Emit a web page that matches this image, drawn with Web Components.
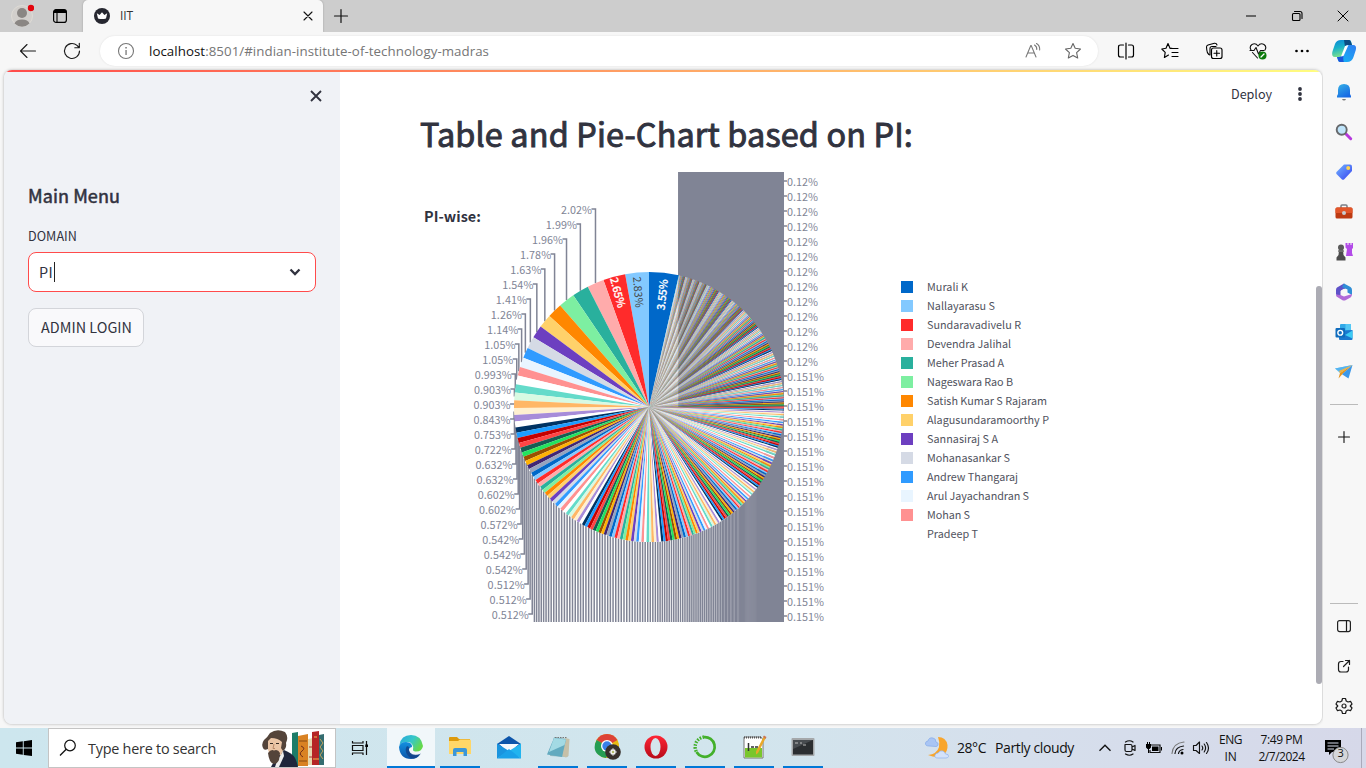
<!DOCTYPE html>
<html lang="en">
<head>
<meta charset="utf-8">
<title>IIT</title>
<style>
html,body{margin:0;height:100%;overflow:hidden;background:#f7f7f7}
</style>
</head>
<body>
<desktop-screen></desktop-screen>
<script>
const SOURCE = '"Noto Sans CJK SC","Noto Sans",sans-serif';
const SEGOE = '"Open Sans","Noto Sans",sans-serif';

function define(name, css, html, after) {
  customElements.define(name, class extends HTMLElement {
    connectedCallback() {
      if (this.shadowRoot) return;
      this.attachShadow({mode: 'open'}).innerHTML = '<style>' + css + '</style>' + (typeof html === 'function' ? html(this) : html);
      if (after) after(this);
    }
  });
}

/* A run of text tracked to a given width: <text-run w="120" size="14"> */
define('text-run', ':host{display:block;white-space:nowrap;flex:none}span{display:inline-block}', '<span><slot></slot></span>', el => {
  const size = el.getAttribute('size');
  if (size) el.style.fontSize = size + 'px';
  const w = +el.getAttribute('w');
  if (!w) return;
  const span = el.shadowRoot.querySelector('span');
  const n = el.textContent.length;
  span.style.letterSpacing = ((w - span.getBoundingClientRect().width) / n) + 'px';
  el.style.width = w + 'px';
});

const line = (d, w = 1, c = '#1b1b1b') => `<path d="${d}" fill="none" stroke="${c}" stroke-width="${w}" stroke-linecap="round" stroke-linejoin="round"/>`;
const ICONS = {
  profile: [24, 24, `<circle cx="12" cy="12" r="10.5" fill="#d2cfcc" stroke="#dedbd6"/><circle cx="12" cy="9" r="5" fill="#8a8683"/><path d="M4.5 19.5Q6 15.5 12 15.5T19.5 19.5Q16 22.8 12 22.8T4.500 19.500" fill="#8a8683"/><circle cx="21" cy="4" r="3.2" fill="#e3040d"/>`],
  workspace: [16, 16, `<rect x="1.600" y="1.600" width="12.800" height="12.800" rx="2.500" fill="none" stroke="#000" stroke-width="1.200"/><path d="M1.500 5V4Q1.500 1.500 4 1.500H12Q14.500 1.500 14.500 4V5Z"/>${line('M5 5V14', 1.1, '#000')}`],
  crown: [18, 18, `<circle cx="9" cy="9" r="8" fill="#262730"/><path d="M3.800 6.200L6.600 8 9 5.300 11.400 8 14.200 6.200 13 11.500Q9 12.700 5 11.500Z" fill="#fff"/>`],
  close: [12, 12, line('M2 2L10 10M10 2L2 10', 1.1, '#111')],
  plus: [16, 16, line('M8 1.500V14.500M1.500 8H14.500', 1.2, '#111')],
  railplus: [16, 16, line('M8 2.500V13.500M2.500 8H13.500', 1.1, '#111')],
  min: [12, 12, '<rect x="1" y="5.500" width="10" height="1" fill="#000"/>'],
  restore: [12, 12, line('M3.500 3.500H8Q9 3.500 9 4.500V9.500Q9 10.500 8 10.500H2.500Q1.500 10.500 1.500 9.500V4.500Q1.500 3.500 2.500 3.500H4M3.500 1.500H9Q11 1.500 11 3.500V8.500', 1.1, '#000')],
  winclose: [12, 12, line('M1 1L11 11M11 1L1 11', 1, '#000')],
  back: [20, 20, line('M17.500 10H2.500M9 3.500L2.500 10 9 16.500', 1.1)],
  refresh: [20, 20, line('M17.500 10A7.500 7.500 0 1 1 15 4.400L17 6.500M17.300 2.300V6.700H12.800', 1.15)],
  info: [18, 18, `<circle cx="9" cy="9" r="7.500" fill="none" stroke="#777" stroke-width="1.100"/><path d="M8.400 8h1.300v5H8.400zM8.300 5h1.500v1.500H8.300z" fill="#777"/>`],
  read: [18, 18, line('M2 15L6.800 3.500H7.200L12 15M4 11H10M10.500 3Q13 4.500 12.800 7.500M12.500 1.500Q16 3.500 15.700 8', 1.05, '#777')],
  star: [18, 18, line('M9 1.500L11.200 6.300 16.500 7 12.600 10.600 13.700 16 9 13.400 4.300 16 5.400 10.600 1.500 7 6.800 6.300Z', 1.1, '#666')],
  split: [18, 18, line('M6.500 3H3.500Q1.500 3 1.500 5V13Q1.500 15 3.500 15H6.500M11.500 3H14.500Q16.500 3 16.500 5V13Q16.500 15 14.500 15H11.500M9 1V17', 1.2, '#000')],
  favs: [18, 18, line('M10.500 6.500L9 6.300 7 1.500 5 6.300 0.800 7 4.200 10.300 3.400 15.500 7.500 13M10.500 6.500H17M11 10.500H17M11 14.500H17M9 6.300H11', 1.15, '#000')],
  collections: [18, 18, `${line('M5 13L3.800 12.500Q2 11 1.800 8L1.500 5Q1.500 3.500 3 3L9.500 1.200Q11.500 1 12 3M5 13V6.500Q5 4.500 7 4.500H11', 1.1, '#000')}<rect x="6.500" y="6" width="10.500" height="10.500" rx="2" fill="#f7f7f7" stroke="#000" stroke-width="1.150"/>${line('M11.750 8.500V14M9 11.250H14.500', 1.1, '#000')}`],
  health: [18, 18, `${line('M2 8Q0 4.500 3 2.500 6.500 0.500 9 4 11.500 0.500 15 2.500 18 4.500 16 8M1 8.500H5L7 5.500 9.500 12 11.500 8.500H15M3.500 10.500L8.500 16', 1.1, '#111')}<circle cx="13.500" cy="13.500" r="4" fill="#0b7a0b"/>${line('M12 15L15 12', 1.2, '#fff')}`],
  dots: [16, 6, '<circle cx="2.500" cy="3" r="1.350"/><circle cx="8" cy="3" r="1.350"/><circle cx="13.500" cy="3" r="1.350"/>'],
  copilot: [26, 26, `<defs><linearGradient id="a" x1="0" y1="0" x2=".3" y2="1"><stop offset="0" stop-color="#0a86d8"/><stop offset=".5" stop-color="#1ab2c8"/><stop offset="1" stop-color="#7de18c"/></linearGradient><linearGradient id="b" x1="1" y1="0" x2="0" y2="1"><stop offset="0" stop-color="#2f7df2"/><stop offset="1" stop-color="#13b8f5"/></linearGradient></defs><path d="M10 2H18Q20 2 20.500 5L21 7H17Q15 7 14 10L11.500 17Q10.500 19 8 19H4Q.300 19 1.300 14L4 6Q5.500 2 10 2Z" fill="url(#a)"/><path d="M13 2H18Q19.500 2 20 4L21 7H17Q15 7 14 9Z" fill="#0b4c83"/><path d="M16 24H9Q7.500 24 7 22L6 19H8Q10.500 19 11.500 17L14 9Q15 7 17 7H22Q26 7 24.800 12L22.500 19Q21 24 16 24Z" fill="url(#b)"/><path d="M6 19H8Q10.500 19 11.500 17L13 13Q11.500 22 13 24H9Q7.500 24 7 22Z" fill="#1c55d9"/><path d="M14 8L17.500 7 12.500 18 10 18.500Z" fill="#fff"/>`],
  bell: [18, 18, `<defs><linearGradient id="a" x1="0" y1="0" x2=".6" y2="1"><stop offset="0" stop-color="#37b3e6"/><stop offset="1" stop-color="#1769e4"/></linearGradient></defs><path d="M7 16H11Q10.500 17.500 9 17.500T7 16Z" fill="#777"/><path d="M2 14.500V13L3 11V7Q3 1 9 1T15 7V11L16 13V14.500Z" fill="url(#a)"/>`],
  magnifier: [18, 18, `<path d="M11 11L15.700 15.700" stroke="#b638dd" stroke-width="3" stroke-linecap="round"/><circle cx="6.700" cy="6.700" r="5" fill="#bfe4fa" stroke="#67696c" stroke-width="1.900"/>`],
  tag: [18, 18, `<defs><linearGradient id="a" x1="0" y1="0" x2="1" y2="1"><stop offset="0" stop-color="#74b6ff"/><stop offset="1" stop-color="#3540f0"/></linearGradient></defs><path d="M9 1.500H15Q17 1.500 17 3.500V8L9 16.500Q8 17 7 16.500L1.500 11Q.800 10 1.500 9Z" fill="url(#a)"/><circle cx="13.200" cy="5" r="2" fill="#ffd34f"/>`],
  toolbox: [18, 18, `<path d="M6 5V3Q6 2 7 2H11Q12 2 12 3V5" fill="none" stroke="#7a7f86" stroke-width="1.500"/><rect x=".500" y="4.500" width="17" height="11" rx="1.500" fill="#bd3a12"/><path d="M.500 10V6Q.500 4.500 2 4.500H16Q17.500 4.500 17.500 6V10Z" fill="#e2562a"/><circle cx="9" cy="10" r="2" fill="#c8ccd0"/>`],
  chess: [18, 18, `<path d="M10.500 0H12.500V2H13.500V0H15.500V2H16.500V0H18.500V4.500L17 6V10L18 13H11L12 6 10.500 4.500Z" fill="#b34be8"/><circle cx="6" cy="4.500" r="3" fill="#5a5a5a"/><path d="M4 7H8L8.500 12 10.500 14.500V17.500H1.500V14.500L3.500 12Z" fill="#4c4c4c"/><path d="M3 7.300H9V8.800H3Z" fill="#777"/>`],
  m365: [18, 18, `<path d="M9 .500L2 4.500Q1 5 1 7V11.500L5.500 14V8L12 4.500Z" fill="#5e52c8"/><path d="M9 .500L15.500 4Q17 5 17 7V12L12.500 9.500V6.500L7 4Z" fill="#2f8ed6"/><path d="M17 11Q17 13.500 15.500 14.500L10.500 17.200Q9 18 7.500 17.200L1.500 13.500Q1 12.500 1 11.500L5.500 12 9 13.500Z" fill="#b06ad8"/><path d="M9 5.800L12 7.500V10.700L9 12.300 6 10.700V7.500Z" fill="#f7f7f7"/>`],
  outlook: [18, 18, `<rect x="5" y="1" width="11" height="13" rx="1" fill="#32a9e8"/><path d="M10.500 1H16V7H10.500Z" fill="#54c8f5"/><path d="M4 8L17.500 7V16Q17.500 17 16.500 17H5Q4 17 4 16Z" fill="#1b78cf"/><path d="M17.500 7.500V15.500L10 12Z" fill="#3ccbf4"/><rect x=".500" y="5" width="9.500" height="9.500" rx="1" fill="#0f6cbd"/><circle cx="5.250" cy="9.750" r="2.400" fill="none" stroke="#fff" stroke-width="1.400"/>`],
  plane: [20, 18, `<path d="M1 5.500L18.500 2 6 10Z" fill="#66c2f5"/><path d="M18.500 2L6 10 4.500 15.500 8 11.500Z" fill="#e6951d"/><path d="M1 5.500L18.500 2 5 8Z" fill="#55b4f0"/><path d="M18.500 2L6 10 5 8Z" fill="#f3b33e"/><path d="M18.500 2L14.500 15.500 8 11.200Z" fill="#3b98ea"/>`],
  panel: [16, 16, `<rect x="1.600" y="2.600" width="12.800" height="11" rx="2" fill="none" stroke="#222" stroke-width="1.200"/>${line('M10.500 3V13', 1.2)}`],
  external: [16, 16, line('M7 3.500H5Q2.500 3.500 2.500 6V11.500Q2.500 14 5 14H10Q12.500 14 12.500 11.500V9M9.500 2.500H13.500V6.500M13.500 2.500L7.500 8.500', 1.2)],
  gear: [18, 18, line('M7.500 1.500H10.500L11.200 4 13 5 15.500 4.300 17 7 15.200 9 17 11 15.500 13.700 13 13 11.200 14 10.500 16.500H7.500L6.800 14 5 13 2.500 13.700 1 11 2.800 9 1 7 2.500 4.300 5 5 6.800 4Z', 1.2) + '<circle cx="9" cy="9" r="2" fill="none" stroke="#222" stroke-width="1.200"/>'],
  x: [16, 16, '<path d="M3 3L13 13M13 3L3 13" stroke="#31333f" stroke-width="1.900"/>'],
  kebab: [6, 16, '<g fill="#31333f"><circle cx="3" cy="3" r="1.900"/><circle cx="3" cy="8" r="1.900"/><circle cx="3" cy="13" r="1.900"/></g>'],
  chevron: [12, 8, '<path d="M1.500 1.500L6 6 10.500 1.500" fill="none" stroke="#31333f" stroke-width="2.300"/>'],
  start: [16, 16, '<path d="M0 2.300L6.800 1.300V7.600H0ZM7.700 1.200L16 0V7.600H7.700ZM0 8.500H6.800V14.800L0 13.800ZM7.700 8.500H16V16L7.700 14.900Z"/>'],
  search: [18, 18, '<circle cx="11" cy="6.500" r="5.300" fill="none" stroke="#111" stroke-width="1.200"/><path d="M7.200 10.300L1 16.500" stroke="#111" stroke-width="1.300"/>'],
  taskview: [18, 18, '<path d="M1.500 2V4H12V2M1.500 16V14H12V16M1.500 6.500H12V11.500H1.500ZM15.500 2V16" fill="none" stroke="#111" stroke-width="1.200"/><path d="M14.300 5.500H17V8H14.300Z"/>'],
  reader: [70, 38, `<path d="M35 4L41 3V37H35Z" fill="#1d7c68"/><path d="M41 7L51 5V37H41Z" fill="#d98223"/><path d="M42 12H50M42 32H50" stroke="#874a12"/><path d="M44 17Q49 19 45 22T46 28" stroke="#702e18" fill="none"/><path d="M51 10L56 9V36H51Z" fill="#e6d9ad"/><path d="M52 18H55M52 28H55" stroke="#a33"/><path d="M55 3L62 2V36H55Z" fill="#b52626"/><path d="M57 8H60M56 30H62" stroke="#f0b94b"/><path d="M62 6L67 5V36H62Z" fill="#346d70"/><path d="M63 10L66 14 63 18 66 22 63 26 66 30" stroke="#c5a35d" fill="none"/><path d="M14 38Q17 32 22 26L27 21Q35 24 38 29 40 33 41 38Z" fill="#20263c"/><path d="M20 32L26 22 27 27 22 38H18Z" fill="#eee"/><path d="M10 10Q13 5 20 6 27 8 27 15 27 21 24 26L14 27Q9 20 10 10Z" fill="#eac5a6"/><path d="M6 19Q4 15 7 11 10 9 13 4 20 -1 28 3 32 8 29 14 30 19 26 22L24 19 25 13Q21 9 14 9L11 12 11 20Q7 22 6 19Z" fill="#54443a"/><path d="M11 24Q14 20 17 21.500 21 20 23 24L22 31Q20 35 17 35 12 34 11 24Z" fill="#54443a"/><path d="M13 14.500H16M19 14.500H22" stroke="#332822" stroke-width="1.200"/><path d="M17 15L16 19.500H18" fill="none" stroke="#b98969"/>`],
  edge: [28, 28, `<defs><linearGradient id="a" x1="0" y1="0" x2="1" y2=".5"><stop offset="0" stop-color="#27a7dc"/><stop offset=".55" stop-color="#36c7c9"/><stop offset="1" stop-color="#65d94b"/></linearGradient><linearGradient id="b" x1="0" y1="0" x2="0" y2="1"><stop offset="0" stop-color="#1390e0"/><stop offset="1" stop-color="#0b55a8"/></linearGradient></defs><path d="M2.500 12Q4 2 14 2T26 13Q25 19 18 18.500 15.500 18 16 16.500 17 10 11 9 5 8.500 2.500 12Z" fill="url(#a)"/><path d="M2 14Q3 9 9 9 15.500 9.500 15 14 11.500 14.500 12 18 14 24 23 21.500 20 26 14 26 3 26 2 14Z" fill="url(#b)"/><path d="M10 13Q7 17 10.500 22 13 25.500 17 25.500 21 24.500 24 20.500 17 23.500 13 19.500 11.500 17.500 12 14Z" fill="#123e82" opacity=".75"/>`],
  folder: [24, 22, `<path d="M1 2Q1 1 2 1H9L11 3H22V9H1Z" fill="#dd9a0c"/><path d="M1 5H10L12 3.500H22Q23 3.500 23 5V18H1Z" fill="#ffd768"/><path d="M5 20V14Q5 12 7 12H17Q19 12 19 14V20H15.500V16H8.500V20Z" fill="#3b97d8"/>`],
  mail: [26, 24, `<path d="M1 9L13 1 25 9V12H1Z" fill="#0d55aa"/><path d="M3 9H23L14 17H12Z" fill="#f4f9fd"/><path d="M1 8.500L13 16 1 23.500Z" fill="#1a94de"/><path d="M25 8.500L13 16 25 23.500Z" fill="#22b4ef"/><path d="M1 23.500L13 14 25 23.500Z" fill="#1ba1e8"/>`],
  notebook: [26, 24, `<path d="M9 2L23 4 22.500 22 5 21Z" fill="#93b9c1"/><path d="M20 3L24.500 4 23.500 21 21 22.500 17 21Z" fill="#c6c0a8"/><path d="M9 3L21 4.500 17 22 2 19.500Z" fill="#62aabf"/><path d="M9 3L21 4.500 19.500 10 4 17Z" fill="#a3dae4"/><path d="M10 2.500H22" stroke="#777" stroke-dasharray="1.500 1"/>`],
  chrome: [28, 28, `<circle cx="14" cy="13" r="12" fill="#e8b912"/><path d="M14 13L3.600 7Q7 1 14 1T24.400 7Z" fill="#dd4236"/><path d="M14 13L3.600 7Q-1 16 5 21.500 8 24.500 13 25L18 16Z" fill="#259d53"/><circle cx="14" cy="13" r="6" fill="#fff"/><circle cx="14" cy="13" r="4.700" fill="#397fe9"/><circle cx="20" cy="19" r="7.800" fill="#38302c"/><path d="M20 15.500V22.500M16.500 19H23.500M17.800 16.800L22.200 21.200M22.200 16.800L17.800 21.200" stroke="#f6f6f6" stroke-width="1.500"/><circle cx="20" cy="19" r="1.200" fill="#b5bc69"/>`],
  opera: [26, 26, `<defs><linearGradient id="a" x1="0" y1="0" x2="0" y2="1"><stop offset="0" stop-color="#ff2635"/><stop offset="1" stop-color="#b70a18"/></linearGradient></defs><ellipse cx="13" cy="13" rx="11.500" ry="11.500" fill="url(#a)"/><ellipse cx="12.500" cy="13" rx="5" ry="9" fill="#d4e5ec"/>`],
  ring: [26, 26, `<path d="M12 3.200A9.800 9.800 0 1 1 4.500 18" fill="none" stroke="#43b02a" stroke-width="2.700"/><path d="M12 3A10 10 0 0 0 4.500 18" fill="none" stroke="#43b02a" stroke-width="3.400" stroke-dasharray="1.600 1.300"/>`],
  npp: [26, 26, `<path d="M3 3H20L22 6V24H3Z" fill="#fff" stroke="#777"/><path d="M4 14H21V23.500H4Z" fill="#79c62c"/><path d="M3 3.500H20" stroke="#555" stroke-width="2" stroke-dasharray="1 1"/><path d="M7.500 9V17M10 13H13M14 13H17" stroke="#333" stroke-width="1.500"/><path d="M23 2L25 3.500 17 19 15 20.500 15 17.500Z" fill="#e9a929"/><path d="M22 3L23 1.500 25.500 3 24.500 5Z" fill="#c75"/>`],
  terminal: [26, 22, `<rect x="1.500" y="2" width="23" height="18" rx="1" fill="#a5a8aa"/><rect x="3" y="4" width="20" height="14.500" fill="#2b2e31"/><path d="M3 4H23L3 13Z" fill="#484c50"/><path d="M5 7H8M10 7H12M13 9H16" stroke="#bbb"/>`],
  weather: [26, 26, `<path d="M14 2Q22 2 23.500 10 24 17 19 20 14 24 4 20 13 19 15 12 16 7 14 2Z" fill="#f8a52c"/><path d="M5 11Q1 11 1.500 8 2 6 4 6 5 2 9 3 12 3.500 12 7 15 8 14 10 13.500 11.500 12 11.500Z" fill="#a9c5f4" stroke="#84a9e9" stroke-width=".700"/><path d="M14 23Q10 23 11 20 12 18 14 18 16 15 19 16 21 17 21.500 19 25 19 24.500 21.500 24 23 22 23Z" fill="#d4e2fa" stroke="#8fb2ec" stroke-width=".700"/>`],
  up: [14, 8, '<path d="M1.500 6.800L7 1.300 12.500 6.800" fill="none" stroke="#111" stroke-width="1.400"/>'],
  meet: [14, 18, line('M2.500 5.500H7.500Q9 5.500 9 7V11Q9 12.500 7.500 12.500H3.500Q2 12.500 2 11V5.500M9 8L12 6.500V11.500L9 10M2.500 3Q6.500 .500 10 3M2.500 15Q6.500 17.500 10 15', 1.2, '#111')],
  battery: [18, 14, '<path d="M5.500 4H15V11.500H5V9" fill="none" stroke="#111" stroke-width="1.200"/><path d="M7 5.500H13.500V10H7ZM16 6H17V9.500H16ZM1 3H6V6.500L4.500 8H2.500L1 6.500ZM2 1H3V3H2ZM4 1H5V3H4ZM3 8H4V12H3Z"/>'],
  wifi: [16, 16, line('M2 13.500Q3 3 14 2', 1.1, '#777') + line('M5 13.500Q5.500 7 13.500 6M8.500 13.500Q9 10 13 9.500', 1.2, '#111') + '<circle cx="12" cy="13" r="1.500"/>'],
  volume: [18, 16, line('M1.500 5.500H4L7.500 2V13.500L4 10.500H1.500ZM10 6Q11.500 8 10 10M12.200 4Q15 8 12.200 12M14.500 2.500Q18.500 8 14.500 13.500', 1.15, '#111')],
  notify: [26, 26, `<path d="M1 2H17V14H8L5 17V14H1Z"/><path d="M3.500 5H14.500M3.500 8H14.500M3.500 11H10" stroke="#d6dae8" stroke-width="1.100"/><circle cx="16.500" cy="17" r="7.600" fill="#d5d6d9" stroke="#888"/>`]
};
define('ui-icon', ':host{display:block;flex:none}svg{display:block}', el => {
  const [w, h, body] = ICONS[el.getAttribute('name')];
  return `<svg width="${w}" height="${h}" viewBox="0 0 ${w} ${h}">${body}</svg>`;
});

/* Fixed-width cell that centres its content */
define('icon-cell', ':host{display:flex;align-items:center;justify-content:center;flex:none}', '<slot></slot>', el => {
  if (el.getAttribute('w')) el.style.width = el.getAttribute('w') + 'px';
  if (el.getAttribute('h')) el.style.height = el.getAttribute('h') + 'px';
});
const cell = (name, w, h) => `<icon-cell w="${w || ''}" h="${h || ''}"><ui-icon name="${name}"></ui-icon></icon-cell>`;

define('tab-strip', `:host{display:flex;height:32px;background:#cdcdcd;font-family:${SEGOE};color:#333}
 .tab{width:240px;margin-left:1px;background:#f7f7f7;border-radius:5px 5px 0 0;display:flex;align-items:center;box-shadow:0 0 2px #999;box-sizing:border-box;padding-left:10px}
 .tab text-run{margin-left:9px;line-height:32px}.tab .c{margin-left:auto}.gap{flex:1}`,
 `${cell('profile', 44)}<icon-cell w="38"><ui-icon name="workspace" style="margin-right:6px"></ui-icon></icon-cell>
 <div class="tab"><ui-icon name="crown"></ui-icon><text-run size="12" w="13">IIT</text-run><div class="c">${cell('close', 31)}</div></div>
 ${cell('plus', 36)}<div class="gap"></div>${cell('min', 46)}${cell('restore', 46)}${cell('winclose', 46)}`);

define('address-bar', `:host{display:flex;height:38px;background:#f7f7f7;font-family:${SEGOE};flex:none}
 .pill{width:998px;height:30px;margin:4px 6px 0 0;border-radius:15px;background:#fff;display:flex;align-items:center;box-shadow:0 0 2px #ddd}
 .url{color:#767676;line-height:30px}.url b{font-weight:400;color:#111}.gap{flex:1}`,
 `${cell('back', 56)}${cell('refresh', 31)}<div style="width:13px"></div><div class="pill" style="flex:none"><icon-cell style="margin-left:17px"><ui-icon name="info"></ui-icon></icon-cell>
 <text-run class="url" size="13.300" w="340" style="margin-left:14px"><b>localhost</b>:8501/#indian-institute-of-technology-madras</text-run><div class="gap"></div>${cell('read', 40)}${cell('star', 40)}<div style="width:5px"></div></div>
 ${['split', 'favs', 'collections', 'health', 'dots'].map(n => cell(n, 44)).join('')}${cell('copilot', 40)}`);

define('edge-rail', `:host{display:flex;flex-direction:column;width:43px;align-items:center;padding-right:1px;box-sizing:border-box;background:#f7f7f7}hr{width:28px;border:0;border-top:1px solid #bbb;margin:0}.gap{flex:1}`,
 `${['bell', 'magnifier', 'tag', 'toolbox', 'chess', 'm365', 'outlook', 'plane'].map(n => cell(n, 42, 40)).join('')}<div style="height:12px"></div><hr>${cell('railplus', 42, 63)}<div class="gap"></div><hr><div style="height:2px"></div>${['panel', 'external', 'gear'].map(n => cell(n, 42, 40)).join('')}<div style="height:2px"></div>`);

define('main-menu', `:host{display:flex;flex-direction:column;align-items:flex-start;width:336px;background:#f0f2f6;box-sizing:border-box;padding:16px 24px 0;color:#31333f;font-family:${SOURCE};flex:none}
 .x{align-self:flex-end;margin-right:-8px}h2{font-size:18px;line-height:24px;margin:79px 0 0;font-weight:400;-webkit-text-stroke:.55px #31333f}
 .label{line-height:22px;margin:18px 0 5px}.select{width:288px;height:40px;box-sizing:border-box;border:1px solid #ff4b4b;border-radius:8px;background:#fff;display:flex;align-items:center;padding:0 14px 0 10px}
 .select text-run{line-height:20px}
 .caret{width:1px;height:20px;background:#222;margin-left:1px}.gap{flex:1}.btn{margin-top:16px;width:116px;height:39px;box-sizing:border-box;border:1px solid #d3d5da;border-radius:8px;background:#f9f9fb;display:flex;align-items:center;justify-content:center}.btn text-run{margin-left:1px;line-height:20px;margin-bottom:1px}`,
 `<ui-icon class="x" name="x"></ui-icon><h2><text-run w="92">Main Menu</text-run></h2><text-run class="label" size="12.600" w="49">DOMAIN</text-run>
 <div class="select"><text-run size="14.400" w="14">PI</text-run><i class="caret"></i><div class="gap"></div><ui-icon name="chevron"></ui-icon></div>
 <div class="btn"><text-run size="14.400" w="91">ADMIN LOGIN</text-run></div>`);

/* ---- Pie chart ---- */
const BASE = ['#0068c9', '#83c9ff', '#ff2b2b', '#ffabab', '#29b09d', '#7defa1', '#ff8700', '#ffd16a', '#6d3fc0', '#d5dae5'];
function shift(hex, amount) {
  const [r, g, b] = [1, 3, 5].map(i => parseInt(hex.slice(i, i + 2), 16) / 255);
  const mx = Math.max(r, g, b), mn = Math.min(r, g, b), d = mx - mn, l = (mx + mn) / 2;
  const s = d ? d / (l > .5 ? 2 - mx - mn : mx + mn) : 0;
  const h = !d ? 0 : mx === r ? ((g - b) / d + 6) % 6 : mx === g ? (b - r) / d + 2 : (r - g) / d + 4;
  return `hsl(${h * 60} ${s * 100}% ${Math.max(0, Math.min(100, (l + amount) * 100))}%)`;
}
const COLORS = [...BASE, ...BASE.map(c => shift(c, .2)), ...BASE.map(c => shift(c, -.2))];
const TOTAL = 3322;
const COUNTS = [118, 94, 88, 67, 66, 65, 59, 54, 51, 47, 42, 38, 35, 35, 33, 30, 30, 28, 25, 24, 21, 21, 20, 20, 19, 18, 18, 18, 17, 17, 17];
const runs = [[16, 3], [15, 5], [14, 5], [13, 4], [12, 8], [11, 13], [10, 9], [9, 14], [8, 18], [7, 12], [6, 44], [5, 33], [4, 77], [3, 44], [2, 85]];
runs.forEach(([v, n]) => { while (n--) COUNTS.push(v); });
for (let sum = COUNTS.reduce((a, b) => a + b, 0); sum < TOTAL; sum++) COUNTS.push(1);
const LEFT = ['2.02%', '1.99%', '1.96%', '1.78%', '1.63%', '1.54%', '1.41%', '1.26%', '1.14%', '1.05%', '1.05%', '0.993%', '0.903%', '0.903%', '0.843%', '0.753%', '0.722%', '0.632%', '0.632%', '0.602%', '0.602%', '0.572%', '0.542%', '0.542%', '0.542%', '0.512%', '0.512%', '0.512%'];

define('pie-chart', `:host{display:block;width:400px;height:450px;flex:none}svg{display:block;overflow:visible}text{font-family:${SOURCE};font-size:10.800px;fill:#808495}`, () => {
  const cx = 189, cy = 235, R = 135;
  const pt = a => [cx - R * Math.sin(a), cy - R * Math.cos(a)];
  let slices = '', lines = '', labels = '';
  const addLine = d => { lines += `<path d="${d}"/>`; };
  let a = -COUNTS[0] / TOTAL * 2 * Math.PI;
  COUNTS.forEach((v, i) => {
    const b = a + v / TOTAL * 2 * Math.PI, mid = (a + b) / 2, p = pt(a), q = pt(b), m = pt(mid);
    slices += `<path d="M${cx} ${cy}L${p[0]} ${p[1]}A${R} ${R} 0 0 0 ${q[0]} ${q[1]}Z" fill="${COLORS[i % 30]}"/>`;
    if (i >= 3 && i < 31) {
      const y = 38 + 15 * (i - 3);
      const text = LEFT[i - 3], w = text.length === 5 ? 31 : 37;
      addLine(`M${m[0]} ${m[1]}V${y - 1}h-4`);
      labels += `<text x="${m[0] - 3.5 - w}" y="${y + 3.800}" textLength="${w}">${text}</text>`;
    } else if (i >= 31 && Math.abs(m[1] - cy) > 6) {
      addLine(`M${Math.min(m[0], 323.25)} ${m[1]}V${m[1] > cy ? 450 : 0}`);
    }
    a = b;
  });
  for (let k = 0; k < 30; k++) {
    const y = 10 + 15 * k, t = k < 13 ? '0.12%' : '0.151%';
    addLine(`M323.500 ${y - 1}h3.500`);
    labels += `<text x="327" y="${y + 3.800}" textLength="${k < 13 ? 31 : 37}">${t}</text>`;
  }
  /* Where the leader lines are packed closer than their own width they merge into a solid block */
  const dense = '<path d="M218.300 0H324V235H189ZM297 450V300L324 235V450Z" fill="#808495"/>';
  return `<svg width="400" height="450" viewBox="0 0 400 450"><g fill="none" stroke="#808495" stroke-width="1.500">${lines}</g><path d="M218.300 0H324V235H218.300Z" fill="#808495"/><path d="M297 450V300L324 235V450Z" fill="#808495"/>${slices}${labels}
  <text transform="translate(204.500 138.500) rotate(-83.600)" textLength="31" style="fill:#fff;font-weight:500;stroke:#fff;stroke-width:.250px">3.55%</text>
  <text transform="translate(173 105) rotate(84.900)" textLength="31" style="fill:#444">2.83%</text>
  <text transform="translate(150 106.500) rotate(75)" textLength="31" style="fill:#fff;font-weight:500;stroke:#fff;stroke-width:.250px">2.65%</text></svg>`;
});

const NAMES = [['Murali K', 41], ['Nallayarasu S', 68], ['Sundaravadivelu R', 94], ['Devendra Jalihal', 84], ['Meher Prasad A', 77], ['Nageswara Rao B', 86], ['Satish Kumar S Rajaram', 120], ['Alagusundaramoorthy P', 122], ['Sannasiraj S A', 71], ['Mohanasankar S', 83], ['Andrew Thangaraj', 91], ['Arul Jayachandran S', 102], ['Mohan S', 43], ['Pradeep T', 51]];
define('chart-legend', `:host{display:flex;flex-direction:column;font-family:${SOURCE};color:#51535e}div{display:flex;align-items:center;height:19px}i{width:12px;height:12px;margin-right:14px;flex:none}text-run{line-height:19px}`,
 NAMES.map(([n, w], i) => `<div><i style="background:${COLORS[i]}"></i><text-run size="10.800" w="${w}">${n}</text-run></div>`).join(''));

define('app-page', `:host{display:flex;flex-direction:column;flex:1;position:relative;background:#fff;font-family:${SOURCE};color:#31333f;min-width:0}
 .bar{display:flex;justify-content:flex-end;align-items:center;height:44px;padding-right:19px;gap:25px}.bar text-run{line-height:44px}
 h2{font-size:32.400px;line-height:44px;margin:-5px 0 0 80px;font-weight:400;-webkit-text-stroke:.95px #31333f;height:44px}
 .row{display:flex;margin:17px 0 0 84px}.cap{width:36px;font-weight:700;line-height:22px;margin-top:33px}chart-legend{margin:105px 0 0 41px}
 .thumb{position:absolute;right:0;top:214px;width:6px;height:398px;border-radius:3px;background:#acacb4}`,
 `<div class="bar"><text-run size="12.600" w="41">Deploy</text-run><ui-icon name="kebab"></ui-icon></div>
 <h2><text-run w="493">Table and Pie-Chart based on PI:</text-run></h2>
 <div class="row"><div class="cap"><text-run size="14.400" w="57">PI-wise:</text-run></div><pie-chart></pie-chart><chart-legend></chart-legend></div><div class="thumb"></div>`);

define('browser-body', `:host{display:flex;flex:1;min-height:0}.frame{margin-left:4px;width:1318px;height:654px;display:flex;flex-direction:column;border-radius:8px;overflow:hidden;flex:none;box-shadow:0 0 3px #aaa}
 .deco{height:2px;background:linear-gradient(90deg,#ff4b4b,#fffd80);flex:none}.cols{display:flex;flex:1;min-height:0}edge-rail{margin-left:1px;padding-top:2px}`,
 `<div class="frame"><div class="deco"></div><div class="cols"><main-menu></main-menu><app-page></app-page></div></div><edge-rail></edge-rail>`);

define('task-bar', `:host{display:flex;height:40px;flex:none;background:linear-gradient(90deg,#cde6ee,#d2e5ed 55%,#d6dfec 75%,#d6d8e9);font-family:${SEGOE};color:#111}
 .search{width:288px;height:40px;box-sizing:border-box;border:1px solid #c4c4c4;background:#fff;display:flex;align-items:center;padding-left:10px;flex:none}.search text-run{margin-left:11px;color:#333}
 .app{width:49px;display:flex;justify-content:center;flex:none}.app div{width:40px;display:flex;align-items:center;justify-content:center;border-bottom:2px solid transparent}.app.on div{border-color:#0078d7}
 .app.active{width:48px;background:#f1f7fa}.app.active div{width:48px}.gap{flex:1}
 .two{display:flex;flex-direction:column;align-items:center;justify-content:center;flex:none}.two text-run{line-height:17px}
 .n{position:relative;margin-left:10px;display:flex;align-items:center;padding-top:5px}.n span{position:absolute;left:13.500px;top:18px;font-size:11px;line-height:14px}.end{width:1px;background:#aab;margin:0 4px 0 11px}`,
 `${cell('start', 48)}<div class="search"><ui-icon name="search"></ui-icon><text-run size="14.400" w="128">Type here to search</text-run><div class="gap"></div><ui-icon name="reader" style="margin-right:8px"></ui-icon></div>
 ${cell('taskview', 48)}<div style="width:3px"></div><div class="app on active"><div><ui-icon name="edge"></ui-icon></div></div>
 ${['folder', 'mail', 'notebook', 'chrome', 'opera', 'ring', 'npp', 'terminal'].map(n => `<div class="app ${n === 'mail' ? '' : 'on'}"><div><ui-icon name="${n}"></ui-icon></div></div>`).join('')}
 <div class="gap"></div>${cell('weather', 30)}<text-run size="14" w="29" style="margin-left:5px;line-height:40px">28°C</text-run><text-run size="14" w="79" style="margin:0 19px 0 9px;line-height:40px">Partly cloudy</text-run>
 ${cell('up', 24)}${cell('meet', 25)}${cell('battery', 23)}${cell('wifi', 25)}${cell('volume', 22)}
 <div class="two" style="width:37px"><text-run size="12" w="23">ENG</text-run><text-run size="12" w="12">IN</text-run></div>
 <div class="two" style="width:65px"><text-run size="12" w="42">7:49 PM</text-run><text-run size="12" w="46">2/7/2024</text-run></div>
 <div class="n"><ui-icon name="notify"></ui-icon><span>3</span></div><div class="end"></div>`);

define('desktop-screen', `:host{display:flex;flex-direction:column;width:1366px;height:768px;background:#f7f7f7;overflow:hidden}browser-body{height:658px;flex:none}`,
 `<tab-strip></tab-strip><address-bar></address-bar><browser-body></browser-body><task-bar></task-bar>`);
</script>
</body>
</html>
